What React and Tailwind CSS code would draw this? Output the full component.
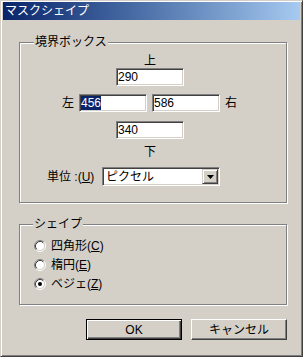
import React from 'react';

const sunken =
  'border border-t-[#808080] border-l-[#808080] border-r-white border-b-white shadow-[inset_1px_1px_0_#404040,inset_-1px_-1px_0_#d4d0c8]';
const etched = 'border border-[#808080] shadow-[inset_1px_1px_0_#fff,1px_1px_0_#fff]';

const Radio = ({ checked }) => (
  <svg width="12" height="12" viewBox="0 0 12 12" className="shrink-0">
    <circle cx="6" cy="6" r="4.5" fill="#fff" />
    <path d="M2.11 9.89 A5.5 5.5 0 0 1 9.89 2.11" fill="none" stroke="#808080" />
    <path d="M9.89 2.11 A5.5 5.5 0 0 1 2.11 9.89" fill="none" stroke="#fff" />
    <path d="M2.82 9.18 A4.5 4.5 0 0 1 9.18 2.82" fill="none" stroke="#404040" />
    <path d="M9.18 2.82 A4.5 4.5 0 0 1 2.82 9.18" fill="none" stroke="#d4d0c8" />
    {checked && <circle cx="6" cy="6" r="2" fill="#000" />}
  </svg>
);

const Field = ({ children, className = '' }) => (
  <div className={`w-[68px] h-[18px] bg-white ${sunken} pl-px flex items-center ${className}`}>{children}</div>
);

const Mn = ({ children }) => <span className="underline underline-offset-1">{children}</span>;

export default function App() {
  return (
    <div className="w-[303px] h-[357px] bg-[#d4d0c8] border border-t-[#d4d0c8] border-l-[#d4d0c8] border-r-[#404040] border-b-[#404040] shadow-[inset_1px_1px_0_#fff,inset_-1px_-1px_0_#808080] pt-px px-[2px] font-['Liberation_Sans','Noto_Sans_CJK_JP',sans-serif] text-[12px] leading-[14px] text-black">
      <div className="h-[18px] bg-linear-to-r from-[#0a246a] to-[#a6caf0] text-white flex items-center pl-[2px]">
        マスクシェイプ
      </div>

      <fieldset className={`mt-[15px] ml-[16px] w-[268px] h-[168px] ${etched}`}>
        <legend className="ml-[14px] px-px bg-[#d4d0c8]">境界ボックス</legend>
        <div className="ml-[96px] w-[68px] text-center mt-[5px]">上</div>
        <Field className="ml-[96px]">290</Field>
        <div className="flex items-center mt-[8px] ml-[42px]">
          <span>左</span>
          <Field className="ml-[5px]">
            <span className="bg-[#0a246a] text-white">456</span>
          </Field>
          <Field className="ml-[5px]">586</Field>
          <span className="ml-[5px]">右</span>
        </div>
        <Field className="ml-[96px] mt-[9px]">340</Field>
        <div className="ml-[96px] w-[68px] text-center mt-[6px]">下</div>
        <div className="flex items-center mt-[8px] ml-[27px]">
          <span className="w-[55px]">
            単位 :(<Mn>U</Mn>)
          </span>
          <div className={`w-[118px] h-[19px] bg-white ${sunken} p-px flex items-center`}>
            <span className="pl-[2px]">ピクセル</span>
            <div className="ml-auto w-[16px] h-full bg-[#d4d0c8] border border-t-[#d4d0c8] border-l-[#d4d0c8] border-r-[#404040] border-b-[#404040] shadow-[inset_1px_1px_0_#fff,inset_-1px_-1px_0_#808080] flex items-center justify-center">
              <svg width="7" height="4" viewBox="0 0 7 4">
                <path d="M0 0h7L3.5 4z" fill="#000" />
              </svg>
            </div>
          </div>
        </div>
      </fieldset>

      <fieldset className={`mt-[14px] ml-[16px] w-[268px] h-[88px] ${etched}`}>
        <legend className="ml-[13px] px-px bg-[#d4d0c8]">シェイプ</legend>
        <div className="mt-[5px] ml-[14px]">
          <div className="h-[19px] flex items-center gap-[5px]">
            <Radio />
            <span>
              四角形(<Mn>C</Mn>)
            </span>
          </div>
          <div className="h-[19px] flex items-center gap-[5px]">
            <Radio />
            <span>
              楕円(<Mn>E</Mn>)
            </span>
          </div>
          <div className="h-[19px] flex items-center gap-[5px]">
            <Radio checked />
            <span>
              ベジェ(<Mn>Z</Mn>)
            </span>
          </div>
        </div>
      </fieldset>

      <div className="flex mt-[14px] ml-[83px] gap-[9px]">
        <button className="w-[96px] h-[21px] bg-[#d4d0c8] border border-black shadow-[inset_1px_1px_0_#fff,inset_-1px_-1px_0_#404040,inset_-2px_-2px_0_#808080]">
          OK
        </button>
        <button className="w-[96px] h-[21px] bg-[#d4d0c8] border border-t-white border-l-white border-r-[#404040] border-b-[#404040] shadow-[inset_-1px_-1px_0_#808080]">
          キャンセル
        </button>
      </div>
    </div>
  );
}
